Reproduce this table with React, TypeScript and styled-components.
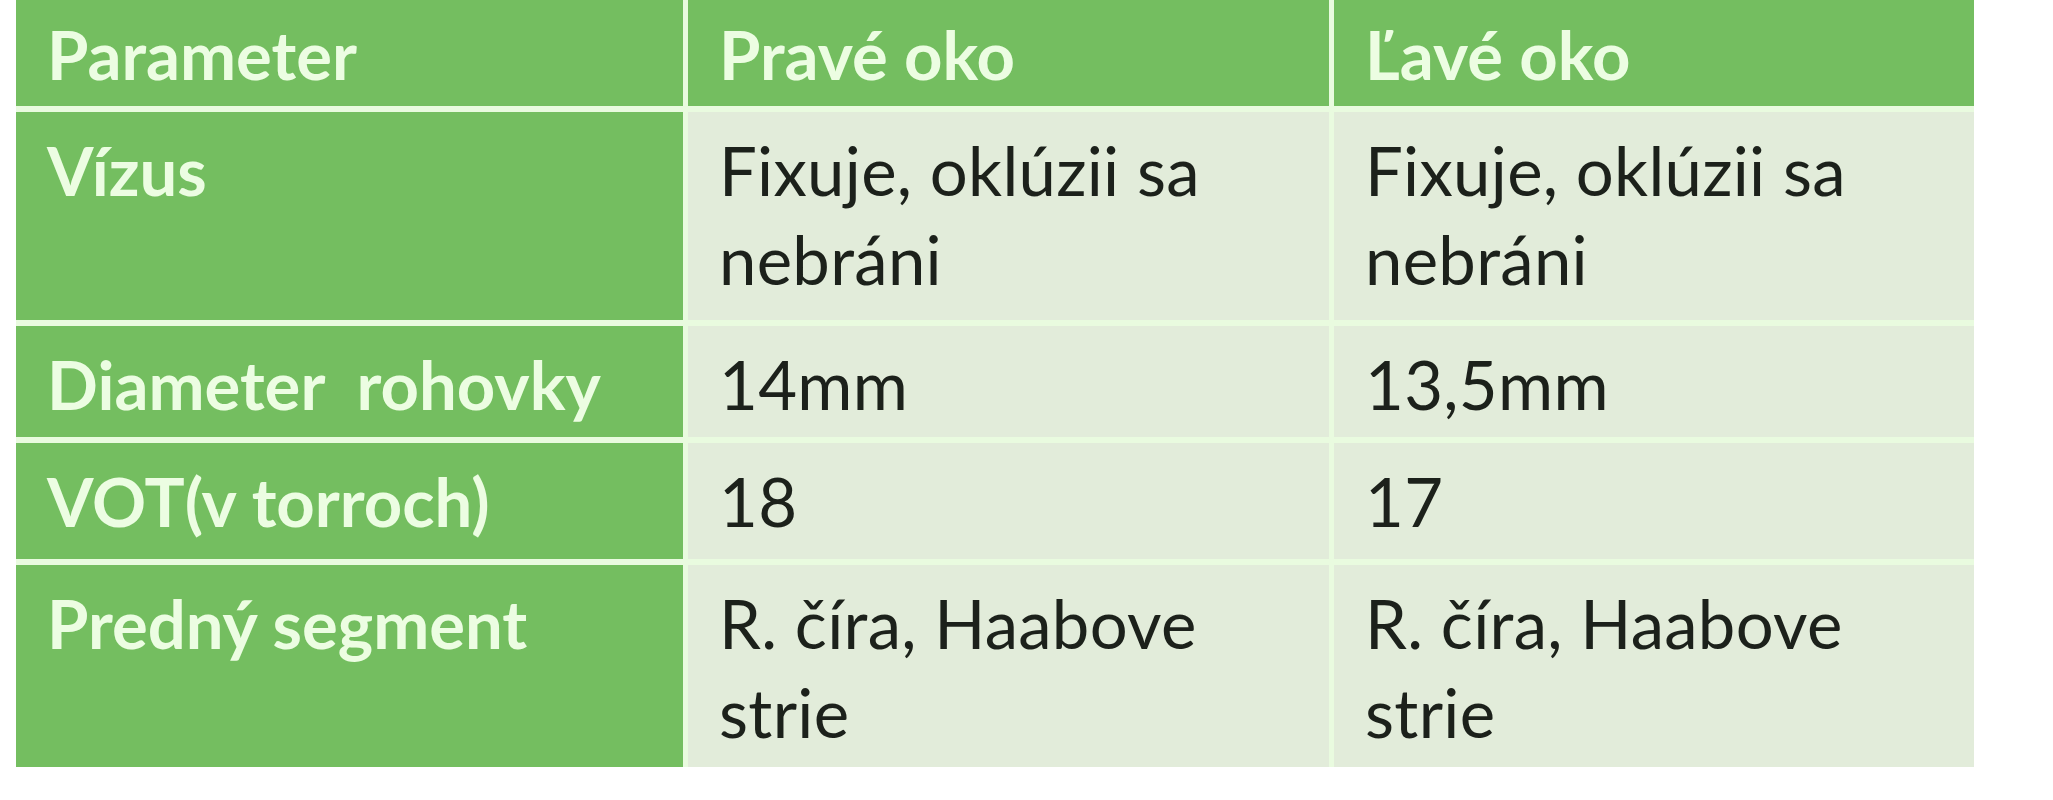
import React from "react";
import styled, { createGlobalStyle } from "styled-components";

const GlobalStyle = createGlobalStyle`
  html, body {
    margin: 0;
    padding: 0;
    background: #ffffff;
  }
  body {
    font-family: Lato, "Open Sans", "Liberation Sans", sans-serif;
  }
`;

const Page = styled.div`
  padding: 0 0 0 16px;
  width: 2053px;
  height: 800px;
  box-sizing: border-box;
  background: #ffffff;
`;

const Table = styled.div`
  display: grid;
  grid-template-columns: 667px 641px 640px;
  grid-template-rows: 106px 208px 111px 116px 202px;
  column-gap: 5px;
  row-gap: 6px;
  width: 1958px;
  background: #e9fbdf;
`;

const Cell = styled.div<{ $variant: "head" | "label" | "value" }>`
  box-sizing: border-box;
  padding: ${(p) => (p.$variant === "head" ? "10px 24px 0 31px" : "14px 24px 0 31px")};
  font-size: 67px;
  line-height: 89px;
  font-weight: ${(p) => (p.$variant === "value" ? 400 : 700)};
  color: ${(p) => (p.$variant === "value" ? "#1c211b" : "#ecfde2")};
  background: ${(p) => (p.$variant === "value" ? "#e2ecda" : "#74be60")};
  letter-spacing: ${(p) => (p.$variant === "value" ? "0.3px" : "0px")};
  white-space: pre-wrap;
`;

const head = ["Parameter", "Pravé oko", "Ľavé oko"];

const rows: [string, string, string][] = [
  ["Vízus", "Fixuje, oklúzii sa nebráni", "Fixuje, oklúzii sa nebráni"],
  ["Diameter  rohovky", "14mm", "13,5mm"],
  ["VOT(v torroch)", "18", "17"],
  ["Predný segment", "R. číra, Haabove strie", "R. číra, Haabove strie"],
];

export default function App() {
  return (
    <>
      <GlobalStyle />
      <Page>
        <Table>
          {head.map((h) => (
            <Cell key={h} $variant="head">
              {h}
            </Cell>
          ))}
          {rows.map((r) => (
            <React.Fragment key={r[0]}>
              <Cell $variant="label">{r[0]}</Cell>
              <Cell $variant="value">{r[1]}</Cell>
              <Cell $variant="value">{r[2]}</Cell>
            </React.Fragment>
          ))}
        </Table>
      </Page>
    </>
  );
}
